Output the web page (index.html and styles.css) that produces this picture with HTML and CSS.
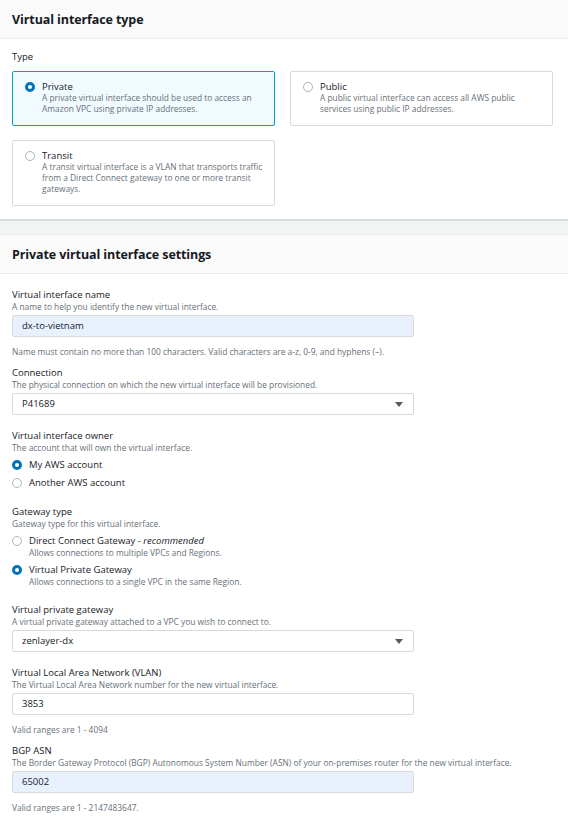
FILE: index.html
```html
<!DOCTYPE html>
<html>
<head>
<meta charset="utf-8">
<link rel="stylesheet" href="styles.css">
</head>
<body>
<section class="panel">
  <div class="panel-head"><h2>Virtual interface type</h2></div>
  <div class="panel-body first">
    <div class="label">Type</div>
    <div class="cards">
      <div class="card selected">
        <span class="radio on"></span>
        <div class="card-text">
          <div class="card-title">Private</div>
          <div class="card-desc">A private virtual interface should be used to access an Amazon VPC using private IP addresses.</div>
        </div>
      </div>
      <div class="card">
        <span class="radio"></span>
        <div class="card-text">
          <div class="card-title">Public</div>
          <div class="card-desc">A public virtual interface can access all AWS public services using public IP addresses.</div>
        </div>
      </div>
      <div class="card tall">
        <span class="radio"></span>
        <div class="card-text">
          <div class="card-title">Transit</div>
          <div class="card-desc">A transit virtual interface is a VLAN that transports traffic from a Direct Connect gateway to one or more transit gateways.</div>
        </div>
      </div>
    </div>
  </div>
</section>
<div class="band"></div>
<section class="panel">
  <div class="panel-head second"><h2>Private virtual interface settings</h2></div>
  <div class="panel-body form">
    <div class="field hinted">
      <div class="label">Virtual interface name</div>
      <div class="desc">A name to help you identify the new virtual interface.</div>
      <div class="input filled">dx-to-vietnam</div>
      <div class="hint">Name must contain no more than 100 characters. Valid characters are a-z, 0-9, and hyphens (–).</div>
    </div>
    <div class="field">
      <div class="label">Connection</div>
      <div class="desc">The physical connection on which the new virtual interface will be provisioned.</div>
      <div class="input select">P41689<span class="caret"></span></div>
    </div>
    <div class="field radios">
      <div class="label">Virtual interface owner</div>
      <div class="desc">The account that will own the virtual interface.</div>
      <div class="opt"><span class="radio on"></span><span class="opt-title">My AWS account</span></div>
      <div class="opt"><span class="radio"></span><span class="opt-title">Another AWS account</span></div>
    </div>
    <div class="field radios">
      <div class="label">Gateway type</div>
      <div class="desc">Gateway type for this virtual interface.</div>
      <div class="opt"><span class="radio"></span><div><div class="opt-title">Direct Connect Gateway - <i>recommended</i></div><div class="desc">Allows connections to multiple VPCs and Regions.</div></div></div>
      <div class="opt"><span class="radio on"></span><div><div class="opt-title">Virtual Private Gateway</div><div class="desc">Allows connections to a single VPC in the same Region.</div></div></div>
    </div>
    <div class="field">
      <div class="label">Virtual private gateway</div>
      <div class="desc">A virtual private gateway attached to a VPC you wish to connect to.</div>
      <div class="input select">zenlayer-dx<span class="caret"></span></div>
    </div>
    <div class="field hinted">
      <div class="label">Virtual Local Area Network (VLAN)</div>
      <div class="desc">The Virtual Local Area Network number for the new virtual interface.</div>
      <div class="input">3853</div>
      <div class="hint">Valid ranges are 1 - 4094</div>
    </div>
    <div class="field hinted">
      <div class="label">BGP ASN</div>
      <div class="desc">The Border Gateway Protocol (BGP) Autonomous System Number (ASN) of your on-premises router for the new virtual interface.</div>
      <div class="input filled">65002</div>
      <div class="hint">Valid ranges are 1 - 2147483647.</div>
    </div>
  </div>
</section>
</body>
</html>
```
FILE: styles.css
```css
html, body {
  margin: 0;
  padding: 0;
  background: #ffffff;
}
body {
  width: 568px;
  font-family: "Open Sans", "Noto Sans", sans-serif;
  color: #16191f;
}
.panel-head {
  background: #fafafa;
  border-bottom: 1px solid #eaeded;
  height: 39px;
  display: flex;
  align-items: center;
  padding: 0 12px;
  box-sizing: border-box;
}
.panel-head.second {
  height: 40px;
  border-top: 1px solid #eaeded;
}
.panel-head h2 {
  margin: 0;
  font-size: 12.5px;
  font-weight: 700;
  letter-spacing: -0.1px;
}
.panel-body {
  padding: 12px 15px 13px 12px;
}
.label {
  font-size: 9.5px;
  line-height: 12px;
  color: #16191f;
}
.first .label {
  margin-bottom: 8px;
}
.cards {
  display: grid;
  grid-template-columns: 263px 263px;
  column-gap: 15px;
  row-gap: 14px;
}
.card {
  border: 1px solid #d5dbdb;
  border-radius: 2px;
  height: 55px;
  box-sizing: border-box;
  padding: 9px 9px 0 12px;
  display: flex;
  gap: 7px;
  align-items: flex-start;
}
.card.tall {
  height: 66px;
}
.card.selected {
  background: #f1faff;
  border-color: #00a1c9;
}
.card-title {
  font-size: 9.5px;
  line-height: 12px;
}
.card-desc {
  font-size: 8.4px;
  line-height: 10.8px;
  color: #687078;
}
.radio {
  flex: none;
  width: 10px;
  height: 10px;
  border-radius: 50%;
  border: 1px solid #aab7b8;
  box-sizing: border-box;
  background: #fff;
  margin-top: 1px;
}
.radio.on {
  border: 3px solid #0073bb;
}
.band {
  height: 13px;
  background: #f2f3f3;
  border-top: 2px solid #d5dbdb;
}
.form {
  padding-top: 15px;
}
.field {
  margin-bottom: 15px;
}
.field.hinted {
  margin-bottom: 10px;
}
.field.radios {
  margin-bottom: 17px;
}
.desc {
  font-size: 8.4px;
  line-height: 11px;
  color: #687078;
}
.input {
  width: 402px;
  height: 22px;
  box-sizing: border-box;
  border: 1px solid #d5dbdb;
  border-radius: 2px;
  margin-top: 3px;
  padding: 0 9px;
  font-size: 9.5px;
  line-height: 20px;
  display: flex;
  align-items: center;
  justify-content: space-between;
}
.input.filled {
  background: #e8f0fe;
}
.caret {
  width: 0;
  height: 0;
  border-left: 4px solid transparent;
  border-right: 4px solid transparent;
  border-top: 5px solid #545b64;
  margin-right: 1px;
}
.hint {
  font-size: 8.4px;
  line-height: 11px;
  color: #687078;
  margin-top: 9px;
}
.opt {
  display: flex;
  gap: 7px;
  align-items: flex-start;
  margin-top: 6px;
}
.opt + .opt {
  margin-top: 6px;
}
.opt .radio {
  margin-top: 1px;
}
.opt-title {
  font-size: 9.5px;
  line-height: 12px;
}
```
